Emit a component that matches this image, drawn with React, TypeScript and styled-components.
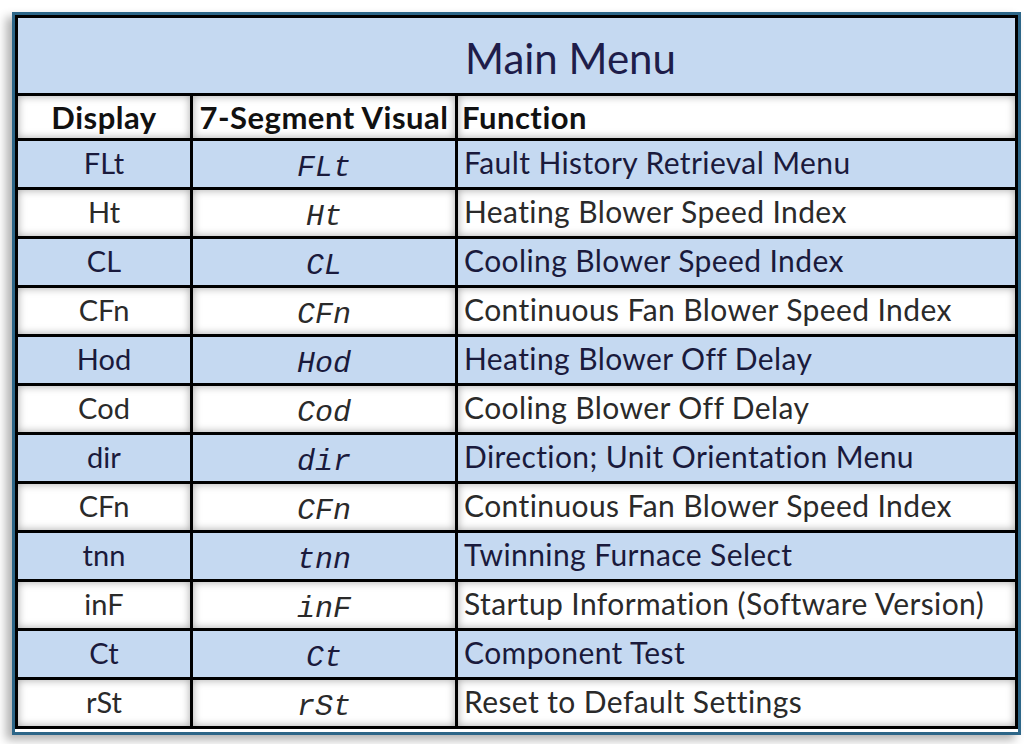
import React from "react";
import styled, { createGlobalStyle } from "styled-components";

const rows = [
  { code: "FLt", fn: "Fault History Retrieval Menu" },
  { code: "Ht", fn: "Heating Blower Speed Index" },
  { code: "CL", fn: "Cooling Blower Speed Index" },
  { code: "CFn", fn: "Continuous Fan Blower Speed Index" },
  { code: "Hod", fn: "Heating Blower Off Delay" },
  { code: "Cod", fn: "Cooling Blower Off Delay" },
  { code: "dir", fn: "Direction; Unit Orientation Menu" },
  { code: "CFn", fn: "Continuous Fan Blower Speed Index" },
  { code: "tnn", fn: "Twinning Furnace Select" },
  { code: "inF", fn: "Startup Information (Software Version)" },
  { code: "Ct", fn: "Component Test" },
  { code: "rSt", fn: "Reset to Default Settings" },
];

const App: React.FC = () => {
  return (
    <Page>
      <GlobalStyle />
      <Frame>
        <Table>
          <colgroup>
            <Col $w={175} />
            <Col $w={265} />
            <Col $w={560} />
          </colgroup>
          <thead>
            <TitleRow>
              <TitleCell colSpan={3}>Main Menu</TitleCell>
            </TitleRow>
            <HeadRow>
              <HeadCell $align="center">Display</HeadCell>
              <HeadCell $align="center">7-Segment Visual</HeadCell>
              <HeadCell $align="left">Function</HeadCell>
            </HeadRow>
          </thead>
          <tbody>
            {rows.map((r, i) => (
              <Row key={i}>
                <CodeCell $blue={i % 2 === 0}>{r.code}</CodeCell>
                <SegCell $blue={i % 2 === 0}>{r.code}</SegCell>
                <FnCell $blue={i % 2 === 0}>{r.fn}</FnCell>
              </Row>
            ))}
          </tbody>
        </Table>
      </Frame>
    </Page>
  );
};

const GlobalStyle = createGlobalStyle`
  html, body {
    margin: 0;
    padding: 0;
    background: #ffffff;
  }
  body {
    font-family: Lato, "Liberation Sans", sans-serif;
  }
`;

const Page = styled.div`
  width: 1024px;
  height: 744px;
  padding: 12px 0 0 12px;
  box-sizing: border-box;
  overflow: hidden;
`;

const Frame = styled.div`
  width: 1009px;
  box-sizing: border-box;
  border: 3px solid #2d6688;
  padding-bottom: 3px;
  background: #ffffff;
  box-shadow: -6px 5px 9px rgba(0, 0, 0, 0.3);
`;

const Table = styled.table`
  width: 100%;
  table-layout: fixed;
  border-collapse: collapse;
  border: 3px solid #000;
`;

const Col = styled.col<{ $w: number }>`
  width: ${(p) => p.$w}px;
`;

const TitleRow = styled.tr`
  height: 78px;
`;

const TitleCell = styled.th`
  background: #c5d9f1;
  border: 3px solid #000;
  padding: 4px 0 0 108px;
  font-family: Lato, "Liberation Sans", sans-serif;
  font-size: 42px;
  font-weight: 400;
  color: #1e1d4a;
  text-align: center;
`;

const HeadRow = styled.tr`
  height: 45px;
`;

const HeadCell = styled.th<{ $align: string }>`
  background: #ffffff;
  border: 3px solid #000;
  box-shadow: inset 0 0 9px rgba(0, 0, 0, 0.35);
  padding: 0 4px;
  font-family: Lato, "Liberation Sans", sans-serif;
  font-size: 31px;
  font-weight: 700;
  letter-spacing: 0.5px;
  color: #111;
  text-align: ${(p) => p.$align};
  white-space: nowrap;
`;

const Row = styled.tr`
  height: 49px;
`;

const BaseCell = styled.td<{ $blue: boolean }>`
  border: 3px solid #000;
  background: ${(p) => (p.$blue ? "#c5d9f1" : "#ffffff")};
  box-shadow: ${(p) => (p.$blue ? "none" : "inset 0 0 9px rgba(0, 0, 0, 0.35)")};
  color: ${(p) => (p.$blue ? "#1a1a3c" : "#2a2a2a")};
  white-space: nowrap;
  padding: 0;
`;

const CodeCell = styled(BaseCell)`
  text-align: center;
  font-family: Lato, "Liberation Sans", sans-serif;
  font-size: 29px;
  padding-bottom: 4px;
`;

const SegCell = styled(BaseCell)`
  text-align: center;
  vertical-align: bottom;
  font-family: "Liberation Mono", monospace;
  font-style: italic;
  font-size: 30px;
  padding-bottom: 2px;
`;

const FnCell = styled(BaseCell)`
  text-align: left;
  padding: 0 0 4px 6px;
  font-family: Lato, "Liberation Sans", sans-serif;
  font-size: 30px;
  letter-spacing: 0.4px;
`;

export default App;
